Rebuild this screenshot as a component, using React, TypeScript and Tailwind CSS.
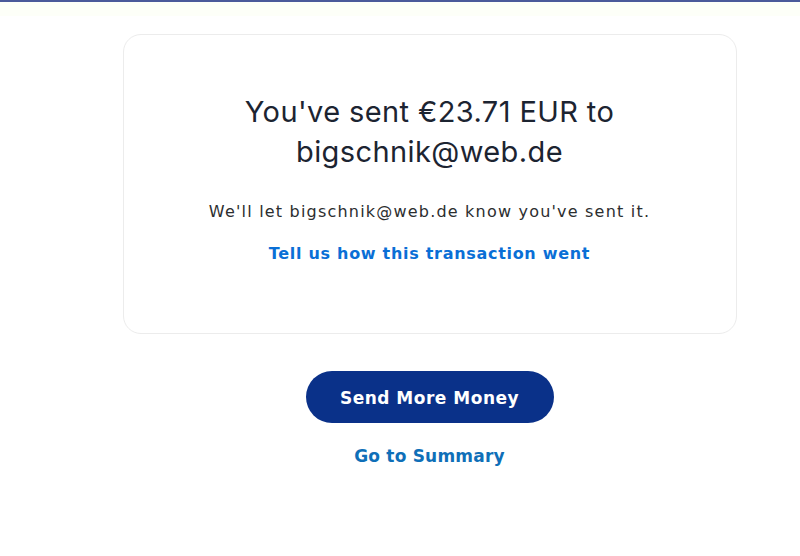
import React from "react";

export default function App() {
  return (
    <div className="w-[800px] h-[556px] bg-white overflow-hidden flex flex-col" style={{ fontFamily: "Inter, 'Noto Sans', sans-serif" }}>
      <div className="h-[2px] bg-[#4a5a9a]" />
      <div className="h-[14px] bg-[#fdfff8]" />
      <div className="flex flex-col items-center">
        <div className="mt-[18px] ml-[59px] w-[614px] h-[300px] rounded-[18px] border border-[#ececec] flex flex-col items-center pt-[57px]">
          <h1 className="text-[29px] leading-[40px] text-[#1c2431] text-center font-normal tracking-[0.4px]">
            You've sent €23.71 EUR to
            <br />
            bigschnik@web.de
          </h1>
          <p className="mt-[28px] text-[16px] leading-[24px] text-[#2c2e2f] font-['DejaVu_Sans',sans-serif] tracking-[1.2px]">We'll let bigschnik@web.de know you've sent it.</p>
          <a className="mt-[18px] text-[16px] leading-[24px] font-bold text-[#0a6fd6] font-['DejaVu_Sans',sans-serif] tracking-[0.7px]">Tell us how this transaction went</a>
        </div>
        <button className="mt-[37px] ml-[59px] w-[248px] h-[52px] pt-[3px] rounded-full bg-[#0a3189] text-white text-[17px] font-bold font-['DejaVu_Sans',sans-serif] tracking-[0.5px]">
          Send More Money
        </button>
        <a className="mt-[20px] ml-[59px] text-[17px] leading-[26px] font-bold text-[#0f6fb8] font-['DejaVu_Sans',sans-serif] tracking-[0.2px]">Go to Summary</a>
      </div>
    </div>
  );
}
